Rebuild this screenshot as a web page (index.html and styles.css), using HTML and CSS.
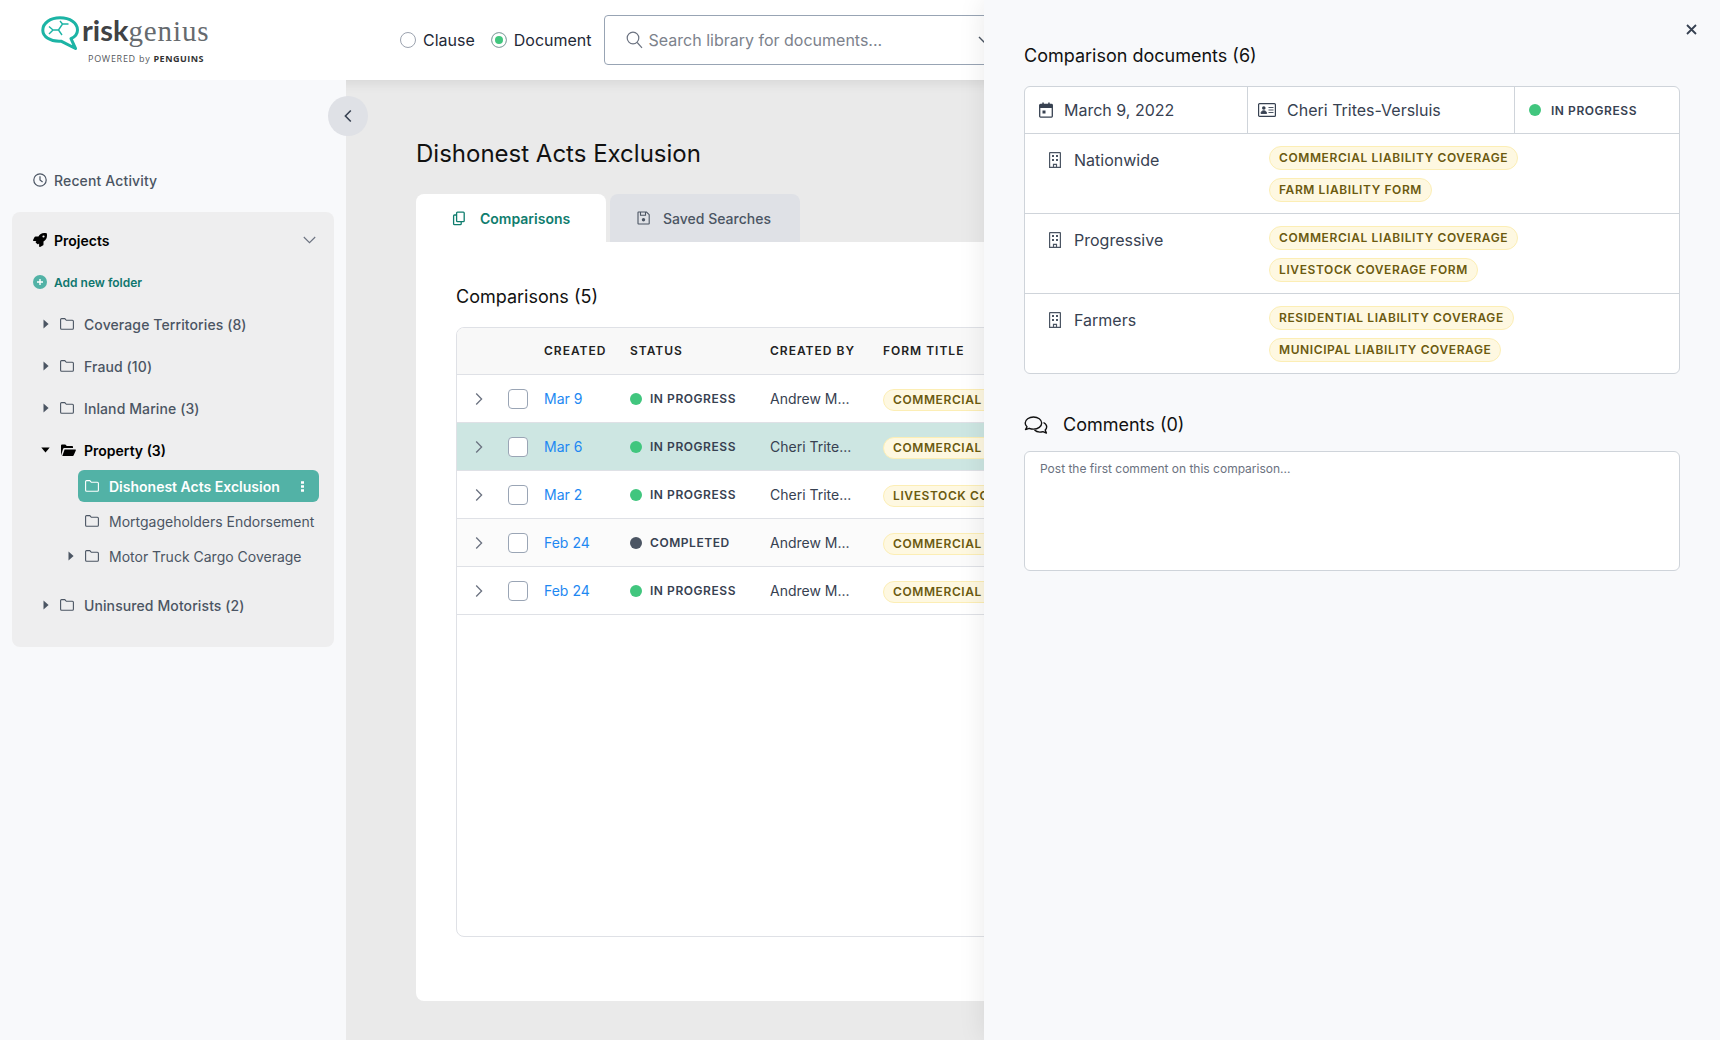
FILE: index.html
```html
<!DOCTYPE html>
<html lang="en">
<head>
<meta charset="utf-8">
<title>riskgenius</title>
<link rel="stylesheet" href="styles.css">
</head>
<body>
<svg class="defs" width="0" height="0" aria-hidden="true">
  <symbol id="folder" viewBox="0 0 14 12"><path d="M1.6.6h3.2l1.5 1.7h6.1c.6 0 1 .4 1 1v6.9c0 .6-.4 1-1 1H1.6c-.6 0-1-.4-1-1V1.6c0-.6.4-1 1-1z" fill="none" stroke="currentColor" stroke-width="1.1"/></symbol>
  <symbol id="caret" viewBox="0 0 6 10"><path d="M.5.6v8.8L5.6 5z" fill="currentColor"/></symbol>
  <symbol id="chev" viewBox="0 0 8 14"><path d="M1.2 1.5 6.6 7l-5.4 5.5" fill="none" stroke="currentColor" stroke-width="1.3"/></symbol>
  <symbol id="building" viewBox="0 0 12 16"><path d="M1 .7h10c.2 0 .4.2.4.4v14.2H.6V1.100c0-.2.2-.4.4-.4zM4.500 15.300v-3h3v3" fill="none" stroke="currentColor" stroke-width="1.200"/><path d="M3 3h2v2H3zM7 3h2v2H7zM3 7h2v2H3zM7 7h2v2H7z" fill="currentColor"/></symbol>
</svg>

<header class="topbar">
  <div class="logo">
    <svg class="logo-mark" viewBox="0 0 38 34" width="38" height="34">
      <path d="M19 1.800C9.500 1.800 1.800 7 1.800 14.200 1.800 21 9.500 25 18 25.300l2-.1 14.500 7.300-4.500-9.800c4.200-2 6.500-5 6.500-8.700C36.500 7 29 1.800 19 1.800z" fill="none" stroke="#1cb4a5" stroke-width="3" stroke-linejoin="round"/>
      <path d="M8 10.500l4 3.500-4 4M12 14h5.500l4-6h6M21.500 8l-2.500-3M17.500 14l3.500 5" fill="none" stroke="#1cb4a5" stroke-width="1.400"/>
    </svg>
    <div class="logo-text">
      <div class="wordmark"><span class="risk">risk</span><span class="genius">genius</span></div>
      <div class="powered">POWERED by <b>PENGUINS</b></div>
    </div>
  </div>
  <label class="radio radio-first"><span class="radio-dot"></span>Clause</label>
  <label class="radio"><span class="radio-dot on"></span>Document</label>
  <div class="search">
    <svg width="17" height="18" viewBox="0 0 17 18"><circle cx="7" cy="7" r="5.800" fill="none" stroke="#6b7280" stroke-width="1.200"/><path d="M11.200 11.500 16 16.800" stroke="#6b7280" stroke-width="1.200"/></svg>
    <span class="placeholder">Search library for documents...</span>
    <svg class="search-chev" width="14" height="8" viewBox="0 0 14 8"><path d="M1 1l6 6 6-6" fill="none" stroke="#4b5563" stroke-width="1.400"/></svg>
  </div>
</header>

<div class="layout">
  <aside class="sidebar">
    <div class="recent">
      <svg width="14" height="14" viewBox="0 0 14 14"><circle cx="7" cy="7" r="6.200" fill="none" stroke="currentColor" stroke-width="1.200"/><path d="M7 3.200V7l2.600 1.900" fill="none" stroke="currentColor" stroke-width="1.200"/></svg>
      Recent Activity
    </div>
    <section class="projects">
      <div class="projects-head">
        <svg width="14" height="14" viewBox="0 0 512 512"><path fill="currentColor" d="M505.120 19.090c-1.190-5.530-6.660-11-12.210-12.190C460.720 0 435.510 0 410.410 0 307.180 0 245.270 55.200 199.050 128H94.840c-16.350.02-35.560 11.880-42.890 26.480L2.520 253.300A28.400 28.400 0 0 0 0 264a24 24 0 0 0 24 24h103.820l-22.470 22.470c-11.370 11.360-13 32.260 0 45.250l50.900 50.900c11.160 11.190 32.160 13.160 45.280 0L224 384.160V488a24 24 0 0 0 24 24 28.560 28.560 0 0 0 10.710-2.520l98.730-49.390c14.630-7.300 26.510-26.500 26.510-42.860V312.800c72.600-46.310 128.030-108.410 128.030-211.100.1-25.200.1-50.400-6.860-82.610zM384.040 168a40 40 0 1 1 40-40 40 40 0 0 1-40 40z"/></svg>
        <span class="projects-title">Projects</span>
        <svg class="projects-chev" width="13" height="8" viewBox="0 0 13 8"><path d="M.8 1l5.700 5.700L12.200 1" fill="none" stroke="#6b7280" stroke-width="1.100"/></svg>
      </div>
      <div class="add-folder">
        <svg width="14" height="14" viewBox="0 0 14 14"><circle cx="7" cy="7" r="7" fill="#52b2a6"/><path d="M7 4v6M4 7h6" stroke="#fff" stroke-width="1.400"/></svg>
        Add new folder
      </div>
      <ul class="tree">
        <li class="node"><svg class="caret"><use href="#caret"/></svg><svg class="folder"><use href="#folder"/></svg>Coverage Territories (8)</li>
        <li class="node"><svg class="caret"><use href="#caret"/></svg><svg class="folder"><use href="#folder"/></svg>Fraud (10)</li>
        <li class="node"><svg class="caret"><use href="#caret"/></svg><svg class="folder"><use href="#folder"/></svg>Inland Marine (3)</li>
        <li class="node node-open">
          <svg class="caret-open" width="9" height="6" viewBox="0 0 9 6"><path d="M.3.500h8.400L4.500 5.500z" fill="currentColor"/></svg>
          <svg class="folder" viewBox="0 0 16 12"><path fill="currentColor" d="M1 11.500V1.500C1 1 1.400.600 2 .600h3.300l1.500 1.500H12c.6 0 1 .4 1 1v1H4.300c-.6 0-1 .3-1.200.7L1 11.500zm1.300.500 2.300-6.500h10.600c.5 0 .8.400.6.900L13.700 11.300c-.1.400-.5.700-1 .7z"/></svg>
          Property (3)
        </li>
        <li class="sub sub-active"><svg class="folder"><use href="#folder"/></svg><span class="sub-label">Dishonest Acts Exclusion</span>
          <svg class="dots" width="3" height="11" viewBox="0 0 3 11"><path fill="currentColor" d="M0 .300h3v2.400H0zM0 4.300h3v2.400H0zM0 8.300h3v2.400H0z"/></svg>
        </li>
        <li class="sub"><svg class="folder"><use href="#folder"/></svg><span class="sub-label">Mortgageholders Endorsement</span></li>
        <li class="sub"><svg class="caret sub-caret"><use href="#caret"/></svg><svg class="folder"><use href="#folder"/></svg><span class="sub-label">Motor Truck Cargo Coverage</span></li>
        <li class="node node-last"><svg class="caret"><use href="#caret"/></svg><svg class="folder"><use href="#folder"/></svg>Uninsured Motorists (2)</li>
      </ul>
    </section>
  </aside>

  <main class="main">
    <h1 class="page-title">Dishonest Acts Exclusion</h1>
    <div class="tabs">
      <div class="tab tab-active">
        <svg width="15" height="15" viewBox="0 0 15 15"><path d="M5.500 1.200h5.800c.5 0 .9.400.9.900v7.700c0 .5-.4.900-.9.900H5.500c-.5 0-.9-.4-.9-.9V2.100c0-.5.400-.9.900-.9zM4.600 4H2.500c-.5 0-.9.400-.9.900v7.900c0 .5.400.9.900.9h5.800c.5 0 .9-.4.900-.9v-2" fill="none" stroke="currentColor" stroke-width="1.300"/></svg>
        Comparisons
      </div>
      <div class="tab">
        <svg width="13" height="14" viewBox="0 0 13 14"><path d="M1.500 1h8l2.700 2.700v8.800c0 .3-.2.500-.5.500H1.500c-.3 0-.5-.2-.5-.5v-11c0-.3.200-.5.500-.5zM3.500 1.200v3h5v-3" fill="none" stroke="currentColor" stroke-width="1.100"/><circle cx="6.500" cy="8.800" r="1.700" fill="currentColor"/></svg>
        Saved Searches
      </div>
    </div>
    <div class="card">
      <h2 class="card-title">Comparisons (5)</h2>
      <div class="table">
        <div class="row head">
          <span></span><span></span><span>CREATED</span><span>STATUS</span><span>CREATED BY</span><span>FORM TITLE</span>
        </div>
        <div class="row">
          <svg class="chev"><use href="#chev"/></svg><span class="check"></span><a class="date">Mar 9</a>
          <span class="status"><i class="dot"></i>IN PROGRESS</span><span class="name">Andrew M...</span>
          <span class="tag">COMMERCIAL LIABILITY COVERAGE</span>
        </div>
        <div class="row row-selected">
          <svg class="chev"><use href="#chev"/></svg><span class="check"></span><a class="date">Mar 6</a>
          <span class="status"><i class="dot"></i>IN PROGRESS</span><span class="name">Cheri Trite...</span>
          <span class="tag">COMMERCIAL LIABILITY COVERAGE</span>
        </div>
        <div class="row">
          <svg class="chev"><use href="#chev"/></svg><span class="check"></span><a class="date">Mar 2</a>
          <span class="status"><i class="dot"></i>IN PROGRESS</span><span class="name">Cheri Trite...</span>
          <span class="tag">LIVESTOCK COVERAGE FORM</span>
        </div>
        <div class="row row-muted">
          <svg class="chev"><use href="#chev"/></svg><span class="check"></span><a class="date">Feb 24</a>
          <span class="status"><i class="dot dot-done"></i>COMPLETED</span><span class="name">Andrew M...</span>
          <span class="tag">COMMERCIAL LIABILITY COVERAGE</span>
        </div>
        <div class="row">
          <svg class="chev"><use href="#chev"/></svg><span class="check"></span><a class="date">Feb 24</a>
          <span class="status"><i class="dot"></i>IN PROGRESS</span><span class="name">Andrew M...</span>
          <span class="tag">COMMERCIAL LIABILITY COVERAGE</span>
        </div>
      </div>
    </div>
  </main>
</div>

<button class="collapse" type="button" aria-label="Collapse"><svg width="8" height="14" viewBox="0 0 8 14"><path d="M6.800 1.500 1.400 7l5.400 5.500" fill="none" stroke="#374151" stroke-width="1.600"/></svg></button>

<aside class="panel">
  <svg class="close" width="11" height="11" viewBox="0 0 11 11"><path d="M1 1l9 9M10 1l-9 9" stroke="#374151" stroke-width="1.800"/></svg>
  <h2 class="panel-title">Comparison documents (6)</h2>
  <div class="docs">
    <div class="docs-head">
      <div class="cell cell-date">
        <svg width="14" height="16" viewBox="0 0 14 16"><path d="M1.500 2.500h11c.4 0 .8.400.8.800v11c0 .4-.4.800-.8.800h-11c-.4 0-.8-.4-.8-.8v-11c0-.4.400-.8.800-.8z" fill="none" stroke="#374151" stroke-width="1.300"/><path d="M.7 3h12.600v3H.7zM3.300.5h1.500V3H3.300zM9.200.5h1.500V3H9.200zM3.500 8.500h3v3h-3z" fill="#374151"/></svg>
        March 9, 2022
      </div>
      <div class="cell cell-user">
        <svg width="18" height="14" viewBox="0 0 18 14"><rect x=".6" y=".6" width="16.800" height="12.800" rx="1" fill="none" stroke="#374151" stroke-width="1.200"/><circle cx="5.800" cy="5" r="1.800" fill="#374151"/><path d="M3 10.500c0-2 1.300-2.800 2.800-2.800s2.800.8 2.800 2.800zM10.500 4.500h5M10.500 7h5M10.500 9.500h5" fill="#374151" stroke="#374151" stroke-width=".9"/></svg>
        Cheri Trites-Versluis
      </div>
      <div class="cell cell-status"><span class="status"><i class="dot"></i>IN PROGRESS</span></div>
    </div>
    <div class="doc">
      <div class="doc-name"><svg class="building"><use href="#building"/></svg>Nationwide</div>
      <div class="doc-tags"><span class="tag">COMMERCIAL LIABILITY COVERAGE</span><span class="tag">FARM LIABILITY FORM</span></div>
    </div>
    <div class="doc">
      <div class="doc-name"><svg class="building"><use href="#building"/></svg>Progressive</div>
      <div class="doc-tags"><span class="tag">COMMERCIAL LIABILITY COVERAGE</span><span class="tag">LIVESTOCK COVERAGE FORM</span></div>
    </div>
    <div class="doc">
      <div class="doc-name"><svg class="building"><use href="#building"/></svg>Farmers</div>
      <div class="doc-tags"><span class="tag">RESIDENTIAL LIABILITY COVERAGE</span><span class="tag">MUNICIPAL LIABILITY COVERAGE</span></div>
    </div>
  </div>
  <h2 class="comments-title">
    <svg width="24" height="18" viewBox="0 0 24 18"><path d="M9.500 1C5 1 1.200 3.600 1.200 7c0 1.500.7 2.800 1.800 3.800L1.500 13.500l3.700-1.200c1.300.5 2.800.8 4.300.8 4.500 0 8.200-2.700 8.200-6.100S14 1 9.500 1z" fill="none" stroke="#111" stroke-width="1.400" stroke-linejoin="round"/><path d="M19.500 6.500c1.900 1 3.200 2.500 3.200 4.300 0 1.200-.5 2.300-1.500 3.200l1.200 3-3.500-1.400c-1 .3-2 .5-3 .5-2.200 0-4.200-.8-5.400-2" fill="none" stroke="#111" stroke-width="1.400" stroke-linejoin="round"/></svg>
    Comments (0)
  </h2>
  <div class="comment-box">Post the first comment on this comparison...</div>
</aside>
</body>
</html>
```

FILE: styles.css
```css
* { box-sizing: border-box; }
html, body { margin: 0; height: 100%; }
body {
  width: 1720px;
  height: 1040px;
  overflow: hidden;
  position: relative;
  font-family: Inter, "Noto Sans", sans-serif;
  color: #111827;
  background: #eaeaea;
}
.defs { position: absolute; }
h1, h2 { margin: 0; font-weight: 400; }
ul { list-style: none; margin: 0; padding: 0; }

/* top bar */
.topbar {
  height: 80px;
  background: #fff;
  display: flex;
  align-items: center;
  padding-left: 41px;
  position: relative;
  z-index: 1;
  box-shadow: 0 2px 12px rgba(0, 0, 0, .1);
}
.logo { flex: 0 0 359px; display: flex; align-items: flex-start; height: 50px; margin-top: 2px; }
.logo-mark { flex: none; }
.logo-text { margin-left: 3px; display: flex; flex-direction: column; margin-top: -2px; }
.wordmark { font-size: 29px; line-height: 32px; height: 33px; color: #404245; white-space: nowrap; }
.risk { font-family: Lato, sans-serif; font-weight: 700; }
.genius { font-family: "Liberation Serif", serif; letter-spacing: .9px; color: #666a6e; }
.powered { margin: 6px 0 0 6px; font-family: "Open Sans", sans-serif; font-size: 9px; line-height: 12px; letter-spacing: .72px; color: #55585c; white-space: nowrap; }
.powered b { color: #333; letter-spacing: .5px; }

.radio { display: flex; align-items: center; font-size: 16px; color: #1f2937; margin-right: 13px; }
.radio-first { margin-right: 16px; }
.radio-dot { width: 16px; height: 16px; border-radius: 50%; border: 1px solid #9ca3af; background: #fff; margin-right: 7px; }
.radio-dot.on { border-color: #9ca3af; background: #41c67e; box-shadow: inset 0 0 0 3px #fff; }

.search {
  width: 410px;
  height: 50px;
  border: 1px solid #98a4b4;
  border-radius: 4px;
  display: flex;
  align-items: center;
  padding-left: 21px;
  margin-left: -1px;
  flex: none;
}
.placeholder { margin-left: 6px; font-size: 16px; color: #7c828c; }
.search-chev { margin-left: auto; margin-right: 21px; }

/* layout */
.layout { display: flex; height: 960px; }

/* sidebar */
.sidebar { flex: 0 0 346px; background: #f8f9fb; padding: 0 12px; position: relative; z-index: 2; }
.recent { display: flex; align-items: center; gap: 7px; height: 28px; margin: 86px 0 18px 21px; font-size: 14px; font-weight: 500; letter-spacing: .14px; color: #4b5563; }
.projects { background: #eeeeef; border-radius: 8px; height: 435px; padding: 0 14px; }
.projects-head { display: flex; align-items: center; gap: 7px; height: 56px; padding-left: 7px; color: #000; font-size: 14px; font-weight: 600; }
.projects-chev { margin-left: auto; margin-right: 4px; }
.add-folder { display: flex; align-items: center; gap: 7px; height: 28px; padding-left: 7px; font-size: 12px; font-weight: 600; color: #0f766e; }
.tree { margin-top: 11px; }
.node { display: flex; align-items: center; height: 34px; margin-bottom: 8px; font-size: 14px; font-weight: 500; letter-spacing: .1px; color: #4b5563; padding-left: 17px; }
.caret { width: 6px; height: 10px; margin-right: 11px; color: #4b5563; flex: none; }
.folder { width: 14px; height: 12px; margin-right: 10px; color: #4b5563; flex: none; }
.node-open { color: #000; font-weight: 600; letter-spacing: 0; margin: 8px 0 3px; padding-left: 15px; }
.node-open .folder { width: 16px; height: 12px; margin-right: 8px; color: #000; }
.caret-open { margin-right: 10px; color: #000; flex: none; }
.sub { display: flex; align-items: center; width: 241px; height: 32px; margin: 0 0 3px 52px; padding-left: 7px; position: relative; font-size: 14px; color: #4b5563; border-radius: 6px; white-space: nowrap; }
.sub-active { background: #52b2a6; color: #fff; font-weight: 600; }
.sub-active .folder { color: #fff; }
.sub-caret { position: absolute; left: -10px; top: 11px; margin: 0; }
.dots { margin-left: auto; margin-right: 15px; color: #fff; }
.node-last { margin-top: 16px; }

/* main */
.main { flex: 1; padding: 54px 0 0 70px; min-width: 0; overflow: hidden; }
.page-title { font-size: 24px; line-height: 40px; color: #111; }
.tabs { display: flex; gap: 4px; margin-top: 20px; }
.tab { width: 190px; height: 48px; display: flex; align-items: center; gap: 13px; padding-left: 27px; background: #dfe1e6; border-radius: 8px 8px 0 0; font-size: 14px; font-weight: 500; color: #4b5563; }
.tab-active { background: #fff; padding-left: 36px; font-weight: 600; color: #0f7d6e; }
.card { width: 1260px; height: 759px; background: #fff; border-radius: 0 0 8px 8px; padding: 40px; }
.card-title { font-size: 18px; line-height: 30px; color: #111; }
.table { margin-top: 15px; height: 610px; width: 1180px; border: 1px solid #dfe1e6; border-radius: 8px; overflow: hidden; }
.row { display: grid; grid-template-columns: 51px 36px 86px 140px 113px 1fr; align-items: center; height: 48px; border-bottom: 1px solid #dfe1e6; font-size: 14px; }
.head { height: 47px; padding-bottom: 2px; background: #f8f8f8; font-size: 12px; font-weight: 600; letter-spacing: 1px; color: #222; }
.row-selected { background: #cde6e2; }
.row-muted { background: #fbfbfb; }
.chev { width: 8px; height: 14px; margin-left: 18px; color: #6b7280; }
.check { width: 20px; height: 20px; border: 1px solid #9aa5b5; border-radius: 4px; background: #fff; }
.date { color: #1e88f2; }
.name { color: #374151; }
.status { display: flex; align-items: center; font-size: 12px; font-weight: 600; letter-spacing: .55px; color: #374151; white-space: nowrap; }
.dot { width: 12px; height: 12px; border-radius: 50%; background: #41c67e; margin-right: 8px; flex: none; }
.dot-done { background: #4b5563; }
.tag { display: inline-flex; align-items: center; height: 24px; padding: 0 9px 2px; border: 1px solid #fceeb5; border-radius: 12px; background: #fef8e1; font-size: 12px; font-weight: 600; letter-spacing: .6px; color: #6b5a10; white-space: nowrap; justify-self: start; }
.row .tag { height: 22px; margin-top: 3px; }

/* collapse */
.collapse { position: absolute; left: 328px; top: 96px; z-index: 3; width: 40px; height: 40px; border: 0; border-radius: 50%; background: #dfe1e6; display: flex; align-items: center; justify-content: center; padding: 0; }

/* panel */
.panel { position: absolute; z-index: 4; top: 0; right: 0; width: 736px; height: 1040px; background: #f8f9fb; padding: 41px 40px 0; box-shadow: 0 0 26px rgba(0, 0, 0, .09); }
.close { position: absolute; top: 24px; left: 702px; }
.panel-title { font-size: 18px; line-height: 30px; color: #111; }
.docs { margin-top: 15px; width: 656px; border: 1px solid #cfd4da; border-radius: 6px; background: #fff; }
.docs-head { display: flex; height: 47px; border-bottom: 1px solid #cfd4da; }
.cell { display: flex; align-items: center; font-size: 16px; color: #374151; }
.cell-date { width: 223px; padding-left: 14px; gap: 11px; border-right: 1px solid #cfd4da; }
.cell-user { width: 267px; padding-left: 10px; gap: 11px; border-right: 1px solid #cfd4da; }
.cell-status { padding-left: 14px; }
.cell-status .dot { margin-right: 10px; }
.doc { display: flex; height: 80px; padding-top: 12px; border-bottom: 1px solid #cfd4da; }
.doc:last-child { border-bottom: 0; height: 79px; }
.doc-name { flex: 0 0 244px; display: flex; align-items: flex-start; padding: 2px 0 0 24px; font-size: 16px; line-height: 24px; color: #374151; }
.building { width: 12px; height: 16px; margin: 4px 13px 0 0; color: #4b5563; flex: none; }
.doc-tags { display: flex; flex-direction: column; align-items: flex-start; gap: 8px; }
.comments-title { display: flex; align-items: center; gap: 15px; margin-top: 36px; font-size: 18px; line-height: 30px; color: #111; }
.comment-box { margin-top: 11px; width: 656px; height: 120px; background: #fff; border: 1px solid #cfd4da; border-radius: 6px; padding: 9px 15px; font-size: 12px; line-height: 16px; color: #6b7280; }
```
